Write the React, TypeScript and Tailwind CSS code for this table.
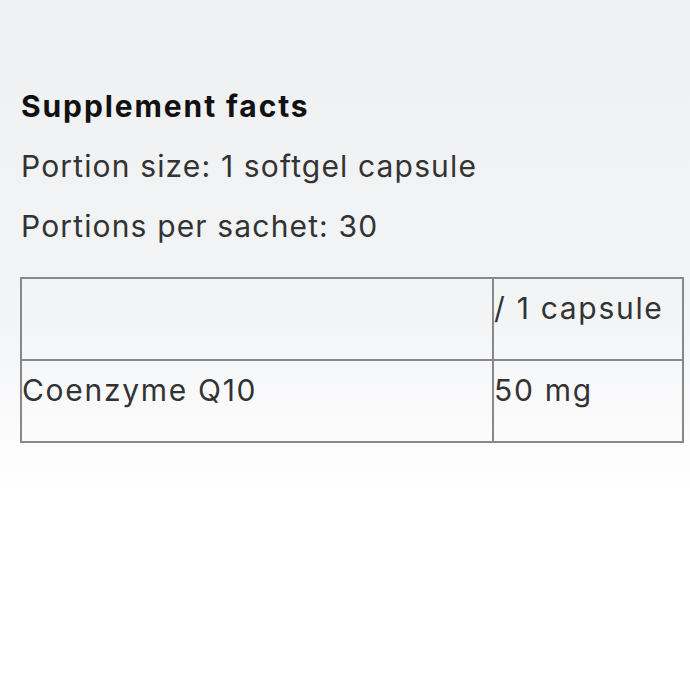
export default function App() {
  return (
    <div
      className="w-[690px] h-[690px] overflow-hidden bg-[linear-gradient(to_bottom,#eff0f2_0%,#f3f4f6_45%,#ffffff_72%)] text-[#333] pt-[84px] pl-[21px]"
      style={{ fontFamily: "Inter, 'Noto Sans', sans-serif" }}
    >
      <h2 className="text-[30px] font-bold text-[#111] leading-[45px] tracking-[1.9px]">Supplement facts</h2>
      <p className="text-[30px] leading-[45px] mt-[15px] tracking-[1.15px]">Portion size: 1 softgel capsule</p>
      <p className="text-[30px] leading-[45px] mt-[15px] tracking-[1.15px]">Portions per sachet: 30</p>
      <table className="mt-[28px] ml-[-1px] w-[664px] border-collapse text-[30px] tracking-[1.7px]">
        <tbody>
          <tr className="h-[82px]">
            <td className="border-2 border-[#888] w-[472px] align-top p-0"></td>
            <td className="border-2 border-[#888] align-top p-0 pt-[7px] leading-[45px]">/ 1 capsule</td>
          </tr>
          <tr className="h-[82px]">
            <td className="border-2 border-[#888] align-top p-0 pt-[7px] leading-[45px]">Coenzyme Q10</td>
            <td className="border-2 border-[#888] align-top p-0 pt-[7px] leading-[45px]">50 mg</td>
          </tr>
        </tbody>
      </table>
    </div>
  );
}
